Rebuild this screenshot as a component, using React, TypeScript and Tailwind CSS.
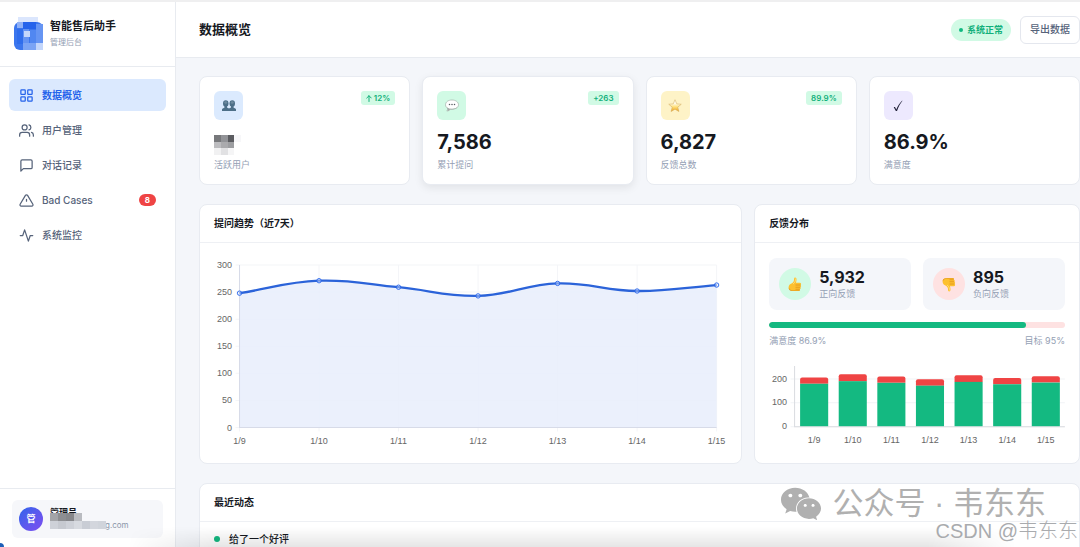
import type { ReactNode } from "react";
import { FaWeixin } from "react-icons/fa";

type Point = { x: number; y: number };

function NavIcon({ children }: { children: ReactNode }) {
  return (
    <svg viewBox="0 0 24 24" className="size-[15px] shrink-0" fill="none" stroke="currentColor" strokeWidth="2" strokeLinecap="round" strokeLinejoin="round" aria-hidden="true">
      {children}
    </svg>
  );
}

const navItems = [
  {
    label: "数据概览",
    active: true,
    icon: (
      <>
        <rect x="3" y="3" width="7" height="7" rx="1" />
        <rect x="14" y="3" width="7" height="7" rx="1" />
        <rect x="14" y="14" width="7" height="7" rx="1" />
        <rect x="3" y="14" width="7" height="7" rx="1" />
      </>
    ),
  },
  {
    label: "用户管理",
    icon: (
      <>
        <path d="M17 21v-2a4 4 0 0 0-4-4H5a4 4 0 0 0-4 4v2" />
        <circle cx="9" cy="7" r="4" />
        <path d="M23 21v-2a4 4 0 0 0-3-3.87M16 3.13a4 4 0 0 1 0 7.75" />
      </>
    ),
  },
  { label: "对话记录", icon: <path d="M21 15a2 2 0 0 1-2 2H7l-4 4V5a2 2 0 0 1 2-2h14a2 2 0 0 1 2 2z" /> },
  {
    label: "Bad Cases",
    badge: 8,
    icon: <path d="M10.29 3.86 1.82 18a2 2 0 0 0 1.71 3h16.94a2 2 0 0 0 1.71-3L13.71 3.86a2 2 0 0 0-3.42 0zM12 10v3" />,
  },
  { label: "系统监控", icon: <path d="M22 12h-4l-3 9L9 3l-3 9H2" /> },
];

function Mosaic({ cells, cell, cols, className }: { cells: string[]; cell: number; cols: number; className: string }) {
  const rows = Math.ceil(cells.length / cols);
  return (
    <svg viewBox={`0 0 ${cols * cell} ${rows * cell}`} className={className} shapeRendering="crispEdges" aria-hidden="true">
      {cells.map((c, i) => (
        <rect key={i} x={(i % cols) * cell} y={Math.floor(i / cols) * cell} width={cell} height={cell} fill={c} />
      ))}
    </svg>
  );
}

function Logo() {
  return (
    <svg viewBox="0 0 30 34" className="h-[34px] w-[30px] shrink-0" aria-hidden="true">
      <rect x="4" y="0" width="20" height="7" fill="#dbe6fd" />
      <rect x="0" y="5" width="29" height="28" rx="6" fill="#3b76ee" />
      <rect x="3" y="5" width="6" height="6" fill="#8fb0f6" />
      <rect x="9" y="5" width="13" height="7" fill="#2563eb" />
      <rect x="22" y="7" width="7" height="19" fill="#6695f3" />
      <rect x="3" y="12" width="6" height="15" fill="#2f6dec" />
      <rect x="9" y="12" width="6" height="14" fill="#6493f3" />
      <rect x="10" y="14" width="6" height="6" fill="#c3d6fb" />
      <rect x="16" y="13" width="6" height="13" fill="#5187f1" />
      <rect x="9" y="26" width="13" height="7" fill="#7ba4f5" />
      <rect x="22" y="26" width="7" height="7" fill="#c3d6fb" />
    </svg>
  );
}

function PeopleGlyph() {
  return (
    <svg viewBox="0 0 28 22" className="h-[11px] w-[14px]" aria-hidden="true">
      <g fill="#4d6f88">
        <ellipse cx="7.5" cy="7" rx="5.5" ry="6.5" />
        <path d="M5 11h5v4l4 2v5H0v-3c0-2 3-2.500 5-4z" />
        <ellipse cx="20.500" cy="7" rx="5.500" ry="6.500" />
        <path d="M18 11h5v4c2 1.500 5 2 5 4v3H14v-5l4-2z" />
      </g>
      <ellipse cx="7.500" cy="5" rx="3" ry="2.500" fill="#6d8a9f" />
      <ellipse cx="20.500" cy="5" rx="3" ry="2.500" fill="#6d8a9f" />
    </svg>
  );
}

function SpeechGlyph() {
  return (
    <svg viewBox="0 0 28 26" className="h-[13px] w-[14px]" aria-hidden="true">
      <path d="M14 2C6.500 2 1 6 1 11.500c0 3.500 2 6 5 7.500 0 2-1 4-2.500 5 3.500 0 6-1.500 7.500-4 1 .2 2 .3 3 .3 7.500 0 13-3.500 13-8.800S21.500 2 14 2z" fill="#fff" stroke="#a7b5ae" strokeWidth="1.500" />
      <path d="M4 17c5 4 16 4 21-1-1 3-6 5-11 5-2 0-2 0-3-.5L6 24z" fill="#a3aaa7" />
      <g fill="#555b60">
        <circle cx="9" cy="11" r="1.500" />
        <circle cx="14" cy="11" r="1.500" />
        <circle cx="19" cy="11" r="1.500" />
      </g>
    </svg>
  );
}

function StarGlyph() {
  return (
    <svg viewBox="0 0 28 26" className="h-[13px] w-[14px]" aria-hidden="true">
      <defs>
        <linearGradient id="star" x1="0" y1="0" x2="0" y2="1">
          <stop offset="0.300" stopColor="#fffdf0" />
          <stop offset="0.600" stopColor="#ffe07a" />
          <stop offset="1" stopColor="#eda01c" />
        </linearGradient>
      </defs>
      <path d="m14 1.500 3.500 8.300 9 .7-6.900 5.800 2.200 8.700-7.800-4.700L6.200 25l2.200-8.700-6.900-5.800 9-.7z" fill="url(#star)" stroke="#cfa658" strokeWidth="1" strokeLinejoin="round" />
    </svg>
  );
}

function CheckGlyph() {
  return (
    <svg viewBox="0 0 20 24" className="h-3 w-2.5" aria-hidden="true">
      <path d="M1.500 14.500c1-1 2-1 2.800 0L6.500 19C9.500 12 13 6.500 18 1.500h1C14.500 7 11 13 8 22H5.700z" fill="#22223a" />
    </svg>
  );
}

function ThumbGlyph({ down = false }: { down?: boolean }) {
  return (
    <svg viewBox="0 0 28 30" className={down ? "h-[15px] w-3.5 -scale-y-100" : "h-[15px] w-3.5"} aria-hidden="true">
      <path d="M13 1.500c2.500-1 4 .5 4 3.500 0 2-.5 4-1 6.500h7.500c3 0 3.500 3.500 1.500 4.500 1.800 1 1.500 3.800-.3 4.500 1.300 1.200.8 3.500-1 4 .8 2-.2 3.500-2.700 3.500h-9C8 28 3 27.500 1.500 23c-1-4 .5-8 4.500-9.500 4-1.700 6-5 6-8 0-1.500 0-3.500 1-4z" fill="#fdc02f" />
      <path d="M15 16h10M15 20.500h9.500M15 24.500h8.500" stroke="#d98a14" strokeWidth="1.300" fill="none" />
      <path d="M1.500 21c1.500 5 6 6 10.500 6h9c1.500 0 2.500-.5 2.700-1.500.3 1.700-.9 2.500-2.700 2.500h-9C6 28 1 27 1.500 21z" fill="#e0921a" />
      <path d="M13.500 3c1.500 0 2 .8 1.500 3-.5 3-2 6-5 8" stroke="#ffe38a" strokeWidth="1.500" fill="none" />
    </svg>
  );
}

const stats = [
  { label: "活跃用户", value: null, tag: "12%", rising: true, tile: "bg-[#dbeafe]", glyph: <PeopleGlyph />, card: "" },
  { label: "累计提问", value: "7,586", tag: "+263", tile: "bg-[#d1fae5]", glyph: <SpeechGlyph />, card: "shadow-[0_3px_8px_rgba(0,0,0,0.08)]" },
  { label: "反馈总数", value: "6,827", tag: "89.9%", tile: "bg-[#fef3c7]", glyph: <StarGlyph />, card: "" },
  { label: "满意度", value: "86.9%", tag: null, tile: "bg-[#ede9fe]", glyph: <CheckGlyph />, card: "" },
];

const days = ["1/9", "1/10", "1/11", "1/12", "1/13", "1/14", "1/15"];
const questions = [248, 271, 259, 243, 266, 252, 263];
const feedback = [
  [178, 26],
  [189, 29],
  [182, 27],
  [170, 27],
  [186, 28],
  [176, 26],
  [183, 27],
];

// Cubic path through the points; handles follow the neighbours' slope.
function smoothPath(points: Point[]) {
  const tension = 0.4;
  const handles = points.map((p, i) => {
    const a = points[i - 1] ?? p;
    const b = points[i + 1] ?? p;
    const before = Math.hypot(p.x - a.x, p.y - a.y);
    const after = Math.hypot(b.x - p.x, b.y - p.y);
    const fa = (tension * before) / (before + after);
    const fb = (tension * after) / (before + after);
    return {
      inn: { x: p.x - fa * (b.x - a.x), y: p.y - fa * (b.y - a.y) },
      out: { x: p.x + fb * (b.x - a.x), y: p.y + fb * (b.y - a.y) },
    };
  });
  return points.reduce((d, p, i) => {
    if (i === 0) return `M${p.x} ${p.y}`;
    const o = handles[i - 1].out;
    const n = handles[i].inn;
    return `${d}C${o.x} ${o.y} ${n.x} ${n.y} ${p.x} ${p.y}`;
  }, "");
}

const chartText = "font-['Liberation_Sans',Arial,sans-serif] text-[9px]";

function TrendChart() {
  const left = 25.5;
  const right = 502.5;
  const base = 169.5;
  const y = (v: number) => base - (v * 162.5) / 300;
  const points = questions.map((v, i) => ({ x: left + (i * (right - left)) / 6, y: y(v) }));
  const line = smoothPath(points);
  return (
    <svg viewBox="0 0 513 189" className={`block h-auto w-full ${chartText}`} role="img" aria-label="提问趋势">
      {[0, 50, 100, 150, 200, 250, 300].map((v) => (
        <g key={v}>
          <line x1={left - 4} x2={right} y1={y(v)} y2={y(v)} stroke="#f4f5f8" />
          <text x="18" y={y(v) + 3} textAnchor="end" fill="#666">{v}</text>
        </g>
      ))}
      {points.map((p, i) => (
        <g key={days[i]}>
          <line x1={p.x} x2={p.x} y1={y(300)} y2={base + 4} stroke="#f4f5f8" />
          <text x={p.x} y="186" textAnchor="middle" fill="#666">{days[i]}</text>
        </g>
      ))}
      <path d={`${line}L${right} ${base}L${left} ${base}Z`} fill="#e8edfc" fillOpacity="0.850" />
      <path d={`M${left} ${y(300)}V${base}H${right}`} fill="none" stroke="#d7dbe8" />
      <path d={line} fill="none" stroke="#2b63d9" strokeWidth="2.300" />
      {points.map((p) => (
        <circle key={p.x} cx={p.x} cy={p.y} r="2.200" fill="#dfe8fc" fillOpacity="0.400" stroke="#2563eb" strokeWidth="0.900" />
      ))}
    </svg>
  );
}

function FeedbackChart() {
  const left = 25.5;
  const right = 295;
  const base = 66;
  const k = 0.2375;
  const step = (right - left) / 7;
  return (
    <svg viewBox="0 0 295 88" className={`block h-auto w-full ${chartText}`} role="img" aria-label="每日反馈">
      {[0, 100, 200].map((v) => (
        <g key={v}>
          <line x1={left - 4} x2={right} y1={base - v * k + 0.5} y2={base - v * k + 0.5} stroke="#f1f3f6" />
          <text x="18" y={base - v * k + 3} textAnchor="end" fill="#666">{v}</text>
        </g>
      ))}
      <path d={`M${left} 6V${base + 0.5}H${right}`} fill="none" stroke="#d9dbe0" />
      {feedback.map(([good, bad], i) => {
        const x = left + step * i + 5.5;
        const top = base - (good + bad) * k;
        const mid = base - good * k;
        return (
          <g key={days[i]}>
            <path d={`M${x} ${mid}V${top + 2}q0-2 2-2h24q2 0 2 2V${mid}z`} fill="#ef4444" />
            <rect x={x} y={mid} width="28" height={base - mid} fill="#14b981" />
            <text x={x + 14} y="83" textAnchor="middle" fill="#666">{days[i]}</text>
          </g>
        );
      })}
    </svg>
  );
}

function Panel({ title, children }: { title: string; children: ReactNode }) {
  return (
    <section className="min-w-0 rounded-lg border border-[#e8ebf1] bg-white">
      <h2 className="flex h-[38px] items-center border-b border-[#eef0f4] px-3.5 text-[10px] font-bold">{title}</h2>
      {children}
    </section>
  );
}

function FeedbackTile({ value, label, down }: { value: string; label: string; down?: boolean }) {
  return (
    <div className="flex h-[52px] items-center gap-2 rounded-lg bg-[#f4f6fa] px-2.5">
      <span className={`flex size-8 shrink-0 items-center justify-center rounded-full ${down ? "bg-[#fee2e2]" : "bg-[#d1fae5]"}`}>
        <ThumbGlyph down={down} />
      </span>
      <div>
        <p className="text-[16px] leading-[18px] font-bold">{value}</p>
        <p className="text-[9px] leading-[15px] text-[#94a0b4]">{label}</p>
      </div>
    </div>
  );
}

export default function App() {
  return (
    <div className="relative flex h-screen overflow-hidden border-t-2 border-[#efeff0] bg-[#f4f6fa] font-['Inter','Noto_Sans_CJK_SC',sans-serif] text-[#16191f]">
      <aside className="flex w-44 shrink-0 flex-col border-r border-[#e8ebf0] bg-white">
        <div className="flex h-[65px] items-center gap-1.5 border-b border-[#e8ebf0] px-3.5">
          <Logo />
          <div>
            <p className="text-[11px] leading-4 font-bold">智能售后助手</p>
            <p className="text-[8px] leading-4 text-[#94a0b4]">管理后台</p>
          </div>
        </div>
        <nav className="flex flex-1 flex-col gap-[3px] px-[9px] py-3">
          {navItems.map((item) => (
            <a
              key={item.label}
              href="#"
              className={`flex h-8 items-center gap-2 rounded-md px-2.5 text-[10px] ${item.active ? "bg-[#dbe9fe] font-semibold text-[#2563eb]" : "font-medium text-[#56637a]"}`}
            >
              <NavIcon>{item.icon}</NavIcon>
              <span className="flex-1">{item.label}</span>
              {item.badge && (
                <span className="rounded-full bg-[#ef4444] px-1.5 text-[8px] leading-3 font-bold text-white">{item.badge}</span>
              )}
            </a>
          ))}
        </nav>
        <div className="border-t border-[#e8ebf0] px-3 pt-[11px] pb-[9px]">
          <div className="flex h-[38px] items-center gap-[7px] rounded-md bg-[#f6f7fa] px-[7px]">
            <span className="flex size-6 items-center justify-center rounded-full bg-linear-to-br from-[#2563eb] to-[#7c4df0] text-[9px] font-bold text-white">管</span>
            <div className="relative flex-1">
              <p className="text-[9px] leading-3 font-bold">管理员</p>
              <p className="pl-[55px] text-[8px] leading-3 text-[#8b96a8]">g.com</p>
              <Mosaic
                className="absolute top-1.5 left-0 h-4 w-14"
                cell={8}
                cols={7}
                cells={["#a3a4a8", "#8d8e92", "#86878b", "#b9bbc0", "transparent", "transparent", "transparent", "#ced1d8", "#c6c9d0", "#ced1d8", "#d7dae0", "#c9cdd5", "#d3d6dd", "#d0d4db"]}
              />
            </div>
          </div>
        </div>
      </aside>

      <div className="flex min-w-0 flex-1 flex-col">
        <header className="flex h-14 shrink-0 items-center gap-[9px] border-b border-[#e8ebf0] bg-white pl-[23px]">
          <h1 className="flex-1 text-[13px] font-bold">数据概览</h1>
          <span className="flex h-[22px] items-center gap-1 rounded-full bg-[#d1fae5] px-2 text-[9px] font-semibold text-[#12b07b]">
            <span className="size-1 rounded-full bg-[#10b981]" />
            系统正常
          </span>
          <button type="button" className="h-7 rounded-md border border-[#e4e7ee] bg-white px-[9px] text-[10px] font-medium text-[#56637a]">导出数据</button>
        </header>

        <main className="flex flex-col gap-[19px] pt-[18px] pl-[23px]">
          <div className="grid grid-cols-4 gap-3">
            {stats.map((s) => (
              <section key={s.label} className={`rounded-lg border border-[#e8ebf1] bg-white px-3.5 pt-3.5 pb-3 ${s.card}`}>
                <div className="flex items-start justify-between">
                  <span className={`flex size-[29px] items-center justify-center rounded-md ${s.tile}`}>{s.glyph}</span>
                  {s.tag && (
                    <span className="flex h-[14px] items-center gap-0.5 rounded-[3px] bg-[#d1fae5] px-[5px] text-[8px] font-semibold text-[#12b07b]">
                      {s.rising && (
                        <svg viewBox="0 0 12 14" className="h-[7px] w-1.5" fill="none" stroke="currentColor" strokeWidth="2" strokeLinecap="round" strokeLinejoin="round" aria-hidden="true">
                          <path d="M6 13V1.500M1.500 6 6 1.500 10.500 6" />
                        </svg>
                      )}
                      {s.tag}
                    </span>
                  )}
                </div>
                <div className="mt-2 h-7 text-[20px] leading-7 font-bold">
                  {s.value ?? (
                    <Mosaic
                      className="h-7 w-[27px] pt-1.5"
                      cell={9}
                      cols={4}
                      cells={["#77787b", "#929397", "#5b5c60", "#f7f7f9", "#bcbcbf", "#aaaaad", "#9d9ea1", "transparent", "#f1f1f2", "#e1e1e3", "#f5f5f6", "transparent"]}
                    />
                  )}
                </div>
                <p className="mt-0.5 text-[9px] leading-[14px] text-[#94a0b4]">{s.label}</p>
              </section>
            ))}
          </div>

          <div className="grid grid-cols-[5fr_3fr] gap-3">
            <Panel title="提问趋势（近7天）">
              <div className="px-3.5 pt-[15px] pb-[15px]">
                <TrendChart />
              </div>
            </Panel>
            <Panel title="反馈分布">
              <div className="px-3.5 py-[15px]">
                <div className="grid grid-cols-2 gap-3">
                  <FeedbackTile value="5,932" label="正向反馈" />
                  <FeedbackTile value="895" label="负向反馈" down />
                </div>
                <div className="mt-3 h-1.5 overflow-hidden rounded-full bg-[#fee2e2]">
                  <div className="h-full rounded-full bg-[#14b981]" style={{ width: "86.9%" }} />
                </div>
                <div className="mt-1.5 mb-3 flex justify-between text-[9px] leading-[14px] text-[#94a0b4]">
                  <span>满意度 86.9%</span>
                  <span>目标 95%</span>
                </div>
                <FeedbackChart />
              </div>
            </Panel>
          </div>

          <Panel title="最近动态">
            <ul className="px-3.5 py-[9px]">
              <li className="flex items-center gap-[9px] text-[10px] leading-4 font-medium">
                <span className="size-1.5 rounded-full bg-[#14b981]" />
                给了一个好评
              </li>
            </ul>
          </Panel>
        </main>
      </div>

      <div className="pointer-events-none absolute right-16 bottom-0 left-32 h-5 bg-linear-to-b from-transparent to-black/10 mask-x-from-90%" />
      <div className="pointer-events-none absolute bottom-0 left-0 size-1 rounded-tr-full bg-[#1d5fb8]" />
      <div className="pointer-events-none absolute right-[34px] bottom-[27px] flex items-center gap-2.5 text-[#b0b0b0]">
        <FaWeixin className="-my-2 size-[42px]" />
        <span className="font-['Liberation_Sans','Noto_Sans_CJK_SC',sans-serif] text-[31px] leading-8 whitespace-nowrap">公众号 · 韦东东</span>
      </div>
      <span className="pointer-events-none absolute right-0.5 bottom-1.5 font-['Liberation_Sans','Noto_Sans_CJK_SC',sans-serif] text-[20px] leading-5 font-light whitespace-nowrap text-[#a9abae] text-shadow-[0_0_1px_#ffffff]">CSDN @韦东东</span>
    </div>
  );
}
